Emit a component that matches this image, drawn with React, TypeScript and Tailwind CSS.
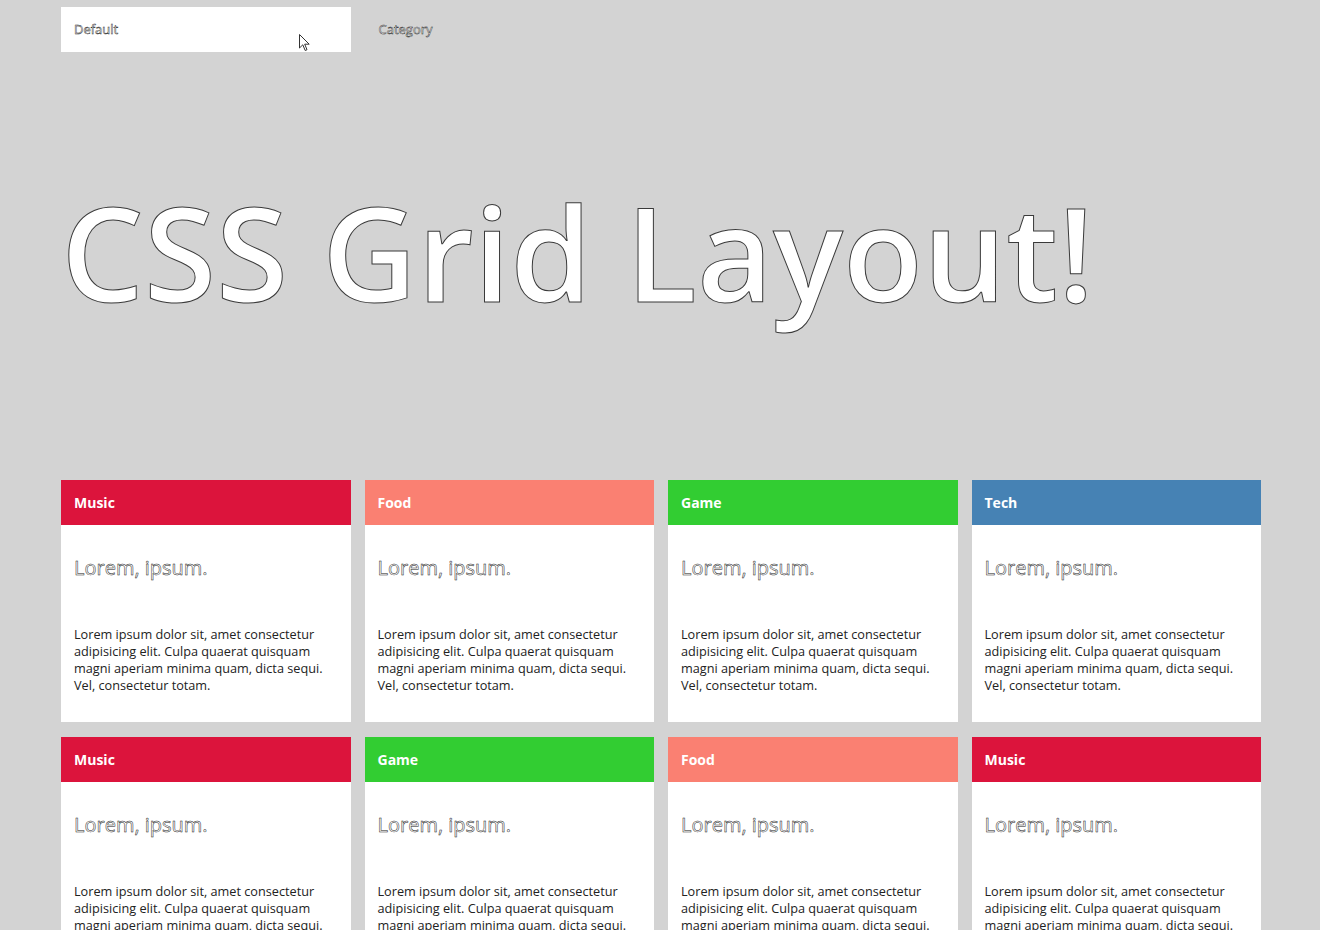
import React from 'react';

const COLORS: Record<string, string> = {
  Music: 'bg-[#dc143c]',
  Food: 'bg-[#fa8072]',
  Game: 'bg-[#32cd32]',
  Tech: 'bg-[#4682b4]',
};

const CARDS = ['Music', 'Food', 'Game', 'Tech', 'Music', 'Game', 'Food', 'Music', 'Tech', 'Food', 'Game', 'Music'];

const Card: React.FC<{ category: string }> = ({ category }) => (
  <article className="bg-white flex flex-col">
    <header className={`${COLORS[category]} h-[45px] px-[13px] flex items-center text-[14px] font-bold text-white`}>
      {category}
    </header>
    <div className="px-[13px] pt-[29px] pb-[28px]">
      <h2 className="text-[20px] leading-[28px] text-white [-webkit-text-stroke:0.5px_#222]">Lorem, ipsum.</h2>
      <p className="mt-[44px] text-[12.7px] leading-[17px] text-[#222]">
        Lorem ipsum dolor sit, amet consectetur adipisicing elit. Culpa quaerat quisquam magni aperiam minima quam, dicta sequi. Vel, consectetur totam.
      </p>
    </div>
  </article>
);

export default function App() {
  return (
    <div className="min-h-screen bg-[#d3d3d3] font-['Open_Sans',sans-serif] pb-10">
      <div className="w-[1200px] ml-[61px] pt-[7px]">
        <div className="grid grid-cols-4 gap-x-[14px]">
          <div className="relative bg-white h-[45px] px-[13px] flex items-center">
            <span className="text-[13px] text-white [-webkit-text-stroke:0.45px_#222]">Default</span>
            <svg className="absolute left-[238px] top-[27px]" width="12" height="18" viewBox="0 0 12 18">
              <path d="M0.5 0.5 L0.5 14 L3.8 10.8 L6.2 16.5 L8 15.7 L5.7 10.2 L10.2 10.2 Z" fill="#fff" stroke="#333" strokeWidth="1" />
            </svg>
          </div>
          <div className="h-[45px] px-[14px] flex items-center">
            <span className="text-[13px] text-white [-webkit-text-stroke:0.45px_#222]">Category</span>
          </div>
        </div>

        <h1 className="mt-[134px] text-[131px] leading-[131px] font-semibold text-white [-webkit-text-stroke:1px_#3a3a3a]">
          CSS Grid Layout!
        </h1>

        <section className="mt-[163px] grid grid-cols-4 gap-x-[14px] gap-y-[15px]">
          {CARDS.map((c, i) => (
            <Card key={i} category={c} />
          ))}
        </section>
      </div>
    </div>
  );
}
